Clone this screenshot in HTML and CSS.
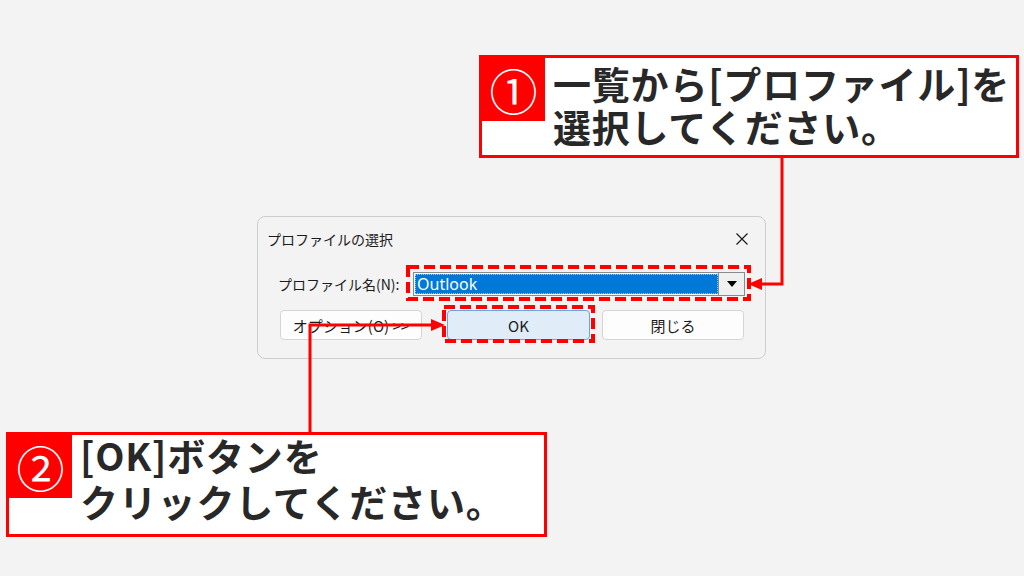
FILE: index.html
```html
<!DOCTYPE html>
<html lang="ja">
<head>
<meta charset="utf-8">
<title>プロファイルの選択</title>
<link rel="stylesheet" href="styles.css">
</head>
<body>
<div class="page">
  <div class="callout callout-top">
    <div class="num">①</div>
    <div class="ctext ctext-top"><div class="cline">一覧から[プロファイル]を</div><div class="cline">選択してください。</div></div>
  </div>

  <div class="dialog">
    <div class="titlebar">
      <span class="title">プロファイルの選択</span>
      <svg class="close" width="12" height="12" viewBox="0 0 12 12"><path d="M0.5 0.5 L11.5 11.5 M11.5 0.5 L0.5 11.5" stroke="#1b1b1b" stroke-width="1.2" fill="none"/></svg>
    </div>
    <div class="row">
      <span class="label">プロファイル名(N):</span>
      <div class="combo">
        <div class="sel">Outlook</div>
        <div class="drop"><svg width="10" height="6" viewBox="0 0 10 6"><path d="M0 0 H10 L5 6 Z" fill="#000"/></svg></div>
      </div>
    </div>
    <div class="buttons">
      <button class="btn btn-opt">オプション(O) &gt;&gt;</button>
      <button class="btn btn-ok">OK</button>
      <button class="btn btn-close">閉じる</button>
    </div>
  </div>

  <div class="callout callout-bottom">
    <div class="num">②</div>
    <div class="ctext ctext-bottom"><div class="cline">[OK]ボタンを</div><div class="cline">クリックしてください。</div></div>
  </div>

  <svg class="overlay" width="1024" height="576" viewBox="0 0 1024 576">
    <rect x="408" y="267" width="341" height="32" fill="none" stroke="#ff0000" stroke-width="4" stroke-dasharray="11 5"/>
    <rect x="444" y="307" width="149" height="34" fill="none" stroke="#ff0000" stroke-width="4" stroke-dasharray="11 5"/>
    <polyline points="782,157 782,284 760,284" fill="none" stroke="#ff0000" stroke-width="3"/>
    <polygon points="748,284 762,278 762,290" fill="#ff0000"/>
    <polyline points="310,434 310,325 433,325" fill="none" stroke="#ff0000" stroke-width="3"/>
    <polygon points="445,325 431,319 431,331" fill="#ff0000"/>
  </svg>
</div>
</body>
</html>
```

FILE: styles.css
```css
html, body {
  margin: 0;
  padding: 0;
  background: #f3f3f3;
}

.page {
  position: relative;
  width: 1024px;
  height: 576px;
  overflow: hidden;
  box-sizing: border-box;
  padding-top: 55px;
  background: #f3f3f3;
  font-family: "Noto Sans CJK JP", "Noto Sans", sans-serif;
  color: #1b1b1b;
}

/* Callouts */
.callout {
  box-sizing: border-box;
  border: 3px solid #ff0000;
  background: #ffffff;
  display: flex;
  align-items: flex-start;
}

.callout-top {
  margin-left: 479px;
  width: 540px;
  height: 103px;
}

.callout-bottom {
  margin-top: 73px;
  margin-left: 6px;
  width: 541px;
  height: 105px;
}

.num {
  flex: none;
  width: 63px;
  height: 63px;
  background: #ff0000;
  color: #ffffff;
  font-size: 48px;
  font-weight: 400;
  line-height: 63px;
  text-align: center;
}

.ctext {
  font-family: "Noto Sans CJK JP", sans-serif;
  font-weight: 700;
  font-size: 38px;
  letter-spacing: 0.8px;
  color: #282828;
  padding-left: 8px;
  white-space: nowrap;
}

.cline {
  height: 43px;
  line-height: 43px;
}

.ctext-top {
  padding-top: 3px;
}

.ctext-bottom {
  margin-top: -3px;
}

.ctext-bottom .cline {
  height: 46px;
  line-height: 46px;
}

/* Dialog */
.dialog {
  box-sizing: border-box;
  margin-top: 58px;
  margin-left: 257px;
  width: 509px;
  height: 143px;
  border: 1px solid #cdcdcd;
  border-radius: 8px;
  background: #f3f3f3;
}

.titlebar {
  height: 43px;
  display: flex;
  align-items: center;
  justify-content: space-between;
  padding: 0 17px 0 9px;
}

.title {
  font-size: 14px;
  color: #1b1b1b;
}

.close {
  display: block;
}

.row {
  margin-top: 12px;
  height: 24px;
  display: flex;
  align-items: center;
  padding-left: 20px;
}

.label {
  width: 135px;
  font-size: 14px;
  color: #1b1b1b;
}

.combo {
  box-sizing: border-box;
  width: 332px;
  height: 24px;
  border: 1px solid #8a8a8a;
  background: #ffffff;
  display: flex;
  padding: 1px 0 1px 1px;
}

.sel {
  flex: 1;
  background: #0078d7;
  color: #ffffff;
  font-family: "Noto Sans", "Open Sans", sans-serif;
  font-size: 16px;
  line-height: 20px;
  padding-left: 2px;
  outline: 1px dotted #9fc6ea;
  outline-offset: -1px;
}

.drop {
  flex: none;
  width: 25px;
  margin-top: -1px;
  margin-bottom: -1px;
  border-left: 1px solid #8a8a8a;
  background: #f0f0f0;
  display: flex;
  align-items: center;
  justify-content: center;
}

.buttons {
  margin-top: 14px;
  display: flex;
  padding-left: 22px;
}

.btn {
  box-sizing: border-box;
  height: 30px;
  border: 1px solid #d5d5d5;
  border-radius: 4px;
  background: #fdfdfd;
  font-family: "Noto Sans CJK JP", sans-serif;
  font-size: 15px;
  color: #1b1b1b;
  padding: 0;
}

.btn-opt {
  width: 142px;
  margin-right: 25px;
}

.btn-ok {
  width: 143px;
  margin-right: 12px;
  background: #e0ecf8;
  border-color: #6aa6dd;
}

.btn-close {
  width: 142px;
}

/* Annotation overlay */
.overlay {
  position: absolute;
  left: 0;
  top: 0;
  pointer-events: none;
}
```
